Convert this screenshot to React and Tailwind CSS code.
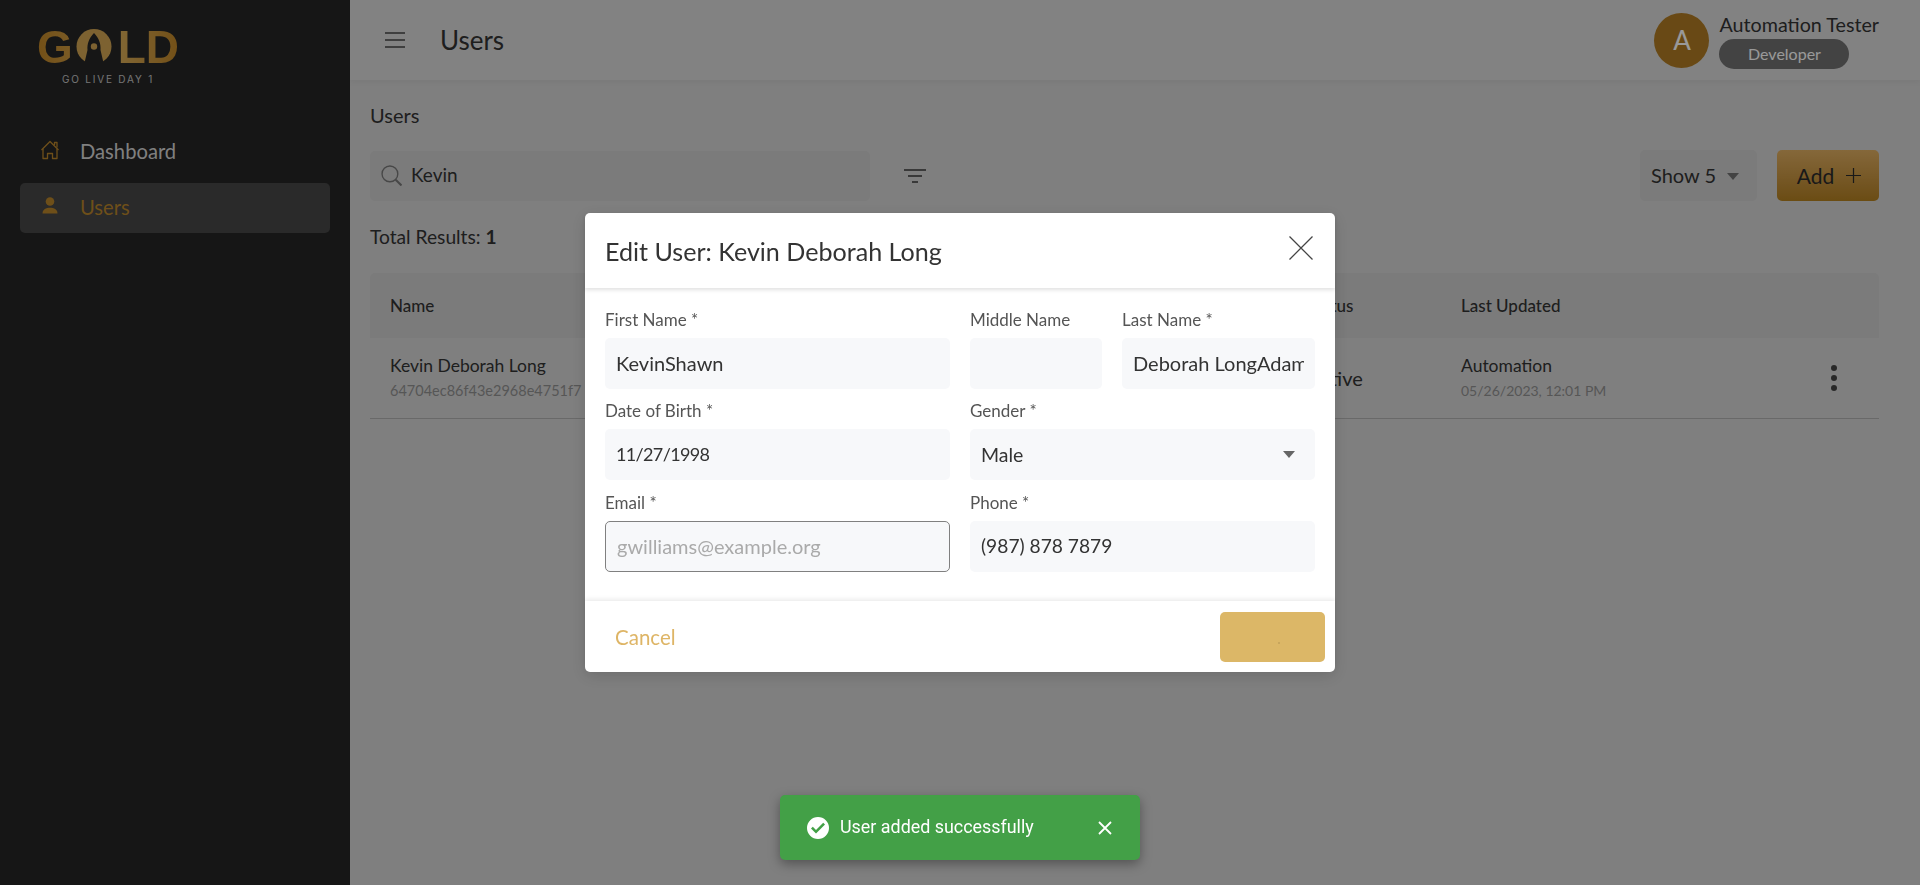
import React from "react";

function Field({ label, value, placeholder, bordered, className, inputClass }) {
  return (
    <div className={className}>
      <label className="block h-[24px] mb-[6px] text-[17px] leading-[24px] text-[#555]">{label}</label>
      <input
        readOnly
        value={value}
        placeholder={placeholder}
        className={
          "block w-full h-[51px] px-[11px] pb-[2px] rounded-[5px] bg-[#f7f8fa] text-[#333] placeholder:text-[#aaa] outline-none " +
          (inputClass || "text-[20px]") +
          (bordered ? " border border-[#808080]" : "")
        }
      />
    </div>
  );
}

function Logo() {
  return (
    <div className="flex flex-col items-center w-[140px]">
      <div className="flex items-center h-[36px] font-['Liberation_Sans',sans-serif] font-bold text-[46px] leading-[36px]">
        <span className="bg-gradient-to-r from-[#bf8526] to-[#cc983f] bg-clip-text text-transparent">G</span>
        <svg viewBox="0 0 36 36" className="w-[36px] h-[36px] ml-[3px] mr-[6px]">
          <circle cx="18" cy="17.5" r="17.5" fill="#d0a453" />
          <path d="M18 4C13 9 11 15 11.500 21L8 36H28L24.500 21C25 15 23 9 18 4Z" fill="#262626" />
          <circle cx="18" cy="17.500" r="3.200" fill="#d0a453" />
        </svg>
        <span className="bg-gradient-to-r from-[#d8ac58] to-[#bf8526] bg-clip-text text-transparent">LD</span>
      </div>
      <div className="mt-[8px] text-[10px] leading-[12px] tracking-[1.8px] text-[#c4c4c4] font-['Inter',sans-serif]">GO LIVE DAY 1</div>
    </div>
  );
}

export default function App() {
  return (
    <div className="relative flex h-[885px] w-full overflow-hidden bg-[#d4d4d4] font-['Lato',sans-serif] text-[#333]">
      {/* Sidebar */}
      <aside className="w-[350px] shrink-0 bg-[#262626] px-[20px]">
        <div className="pt-[29px] pl-[18px] h-[126px]">
          <Logo />
        </div>
        <nav className="flex flex-col">
          <div className="flex items-center h-[50px] pt-[1px] pl-[20px] text-[20.2px] text-[#d5d5d5]">
            <svg viewBox="0 0 20 20" className="w-[20px] h-[20px] mr-[20px] -mt-[4px]" fill="none" stroke="#b7842b" strokeWidth="1.300" strokeLinejoin="round">
              <path d="M1.500 10 10 1.500l8.500 8.500" />
              <path d="M3 9v9.500h4.500V13.500h5v5H17V9" />
              <path d="M14.500 5V2.500H17V7.500" />
            </svg>
            <span>Dashboard</span>
          </div>
          <div className="flex items-center h-[50px] mt-[7px] pb-[2px] pl-[20px] rounded-[5px] bg-[#464646] text-[20.2px] text-[#b7842b]">
            <svg viewBox="0 0 20 20" className="w-[20px] h-[20px] mr-[20px] -mt-[2px]" fill="#b7842b">
              <circle cx="10" cy="5.500" r="4.300" />
              <path d="M2.500 17.500C2.500 13.500 6 11.800 10 11.800s7.500 1.700 7.500 5.700z" />
            </svg>
            <span>Users</span>
          </div>
        </nav>
      </aside>

      {/* Main */}
      <main className="flex-1 min-w-0">
        <header className="flex items-center justify-between h-[80px] pl-[35px] pr-[41px] bg-[#d9d9d9] shadow-[0_2px_6px_rgba(0,0,0,0.05)]">
          <div className="flex items-center">
            <svg viewBox="0 0 20 16" className="w-[20px] h-[16px]" stroke="#444" strokeWidth="1.600">
              <path d="M0 1h20M0 8h20M0 15h20" />
            </svg>
            <h1 className="ml-[35px] text-[26px] leading-[30px] text-[#333]">Users</h1>
          </div>
          <div className="flex items-center">
            <div className="flex items-center justify-center w-[55px] h-[55px] rounded-full bg-[#af7b23] text-[26px] text-white">A</div>
            <div className="ml-[10px] pt-[1px]">
              <div className="text-[19.7px] leading-[24px] text-[#333] mb-[2px]">Automation Tester</div>
              <div className="flex items-center justify-center w-[130px] h-[30px] rounded-full bg-[#707070] text-[16px] text-white">Developer</div>
            </div>
          </div>
        </header>

        <div className="pl-[20px] pr-[41px]">
          <div className="pt-[24px] text-[20px] leading-[22px] text-[#333]">Users</div>
          <div className="flex items-center mt-[24px] h-[51px]">
            <div className="flex items-center w-[500px] h-[50px] pl-[11px] rounded-[5px] bg-[#cdcdcd] text-[19px]">
              <svg viewBox="0 0 20 20" className="w-[21px] h-[21px]" fill="none" stroke="#777" strokeWidth="1.300">
                <circle cx="8.500" cy="8.500" r="7.500" />
                <path d="M14 14l5.500 5.500" strokeWidth="2" />
              </svg>
              <span className="ml-[9px] text-[#333]">Kevin</span>
            </div>
            <svg viewBox="0 0 22 14" className="ml-[34px] w-[22px] h-[14px]" stroke="#393939" strokeWidth="1.700">
              <path d="M0 1h22M4 7h14M8 13h6" />
            </svg>
            <div className="flex-1" />
            <div className="flex items-center w-[117px] h-[51px] pl-[11px] pb-[2px] rounded-[5px] bg-[#cdcdcd] text-[20px]">
              <span>Show 5</span>
              <span className="ml-[11px] mt-[4px] w-0 h-0 border-x-[6px] border-x-transparent border-t-[7px] border-t-[#707070]" />
            </div>
            <div className="flex items-center justify-center gap-[12px] ml-[20px] pl-[2px] w-[102px] h-[51px] rounded-[5px] bg-gradient-to-b from-[#dead61] to-[#b27f20] text-[21px] text-[#2b2b2b]">
              <span>Add</span>
              <svg viewBox="0 0 16 16" className="w-[15px] h-[15px]" stroke="#2b2b2b" strokeWidth="1.300">
                <path d="M8 0v16M0 8h16" />
              </svg>
            </div>
          </div>
          <div className="mt-[24px] text-[19.200px] leading-[24px]">
            Total Results: <span className="font-bold">1</span>
          </div>

          <div className="mt-[24px]">
            <div className="grid grid-cols-[917px_154px_1fr] items-center h-[65px] pl-[20px] pr-[19px] pt-[1px] rounded-t-[5px] bg-[#cdcdcd] text-[17px] font-medium text-[#333]">
              <span>Name</span>
              <span>Status</span>
              <span>Last Updated</span>
            </div>
            <div className="grid grid-cols-[917px_154px_1fr_auto] items-center h-[81px] pl-[20px] pr-[19px] border-b border-[#b0b0b0]">
              <div>
                <div className="text-[17.500px] leading-[22px]">Kevin Deborah Long</div>
                <div className="mt-[4px] text-[14.500px] leading-[20px] text-[#909090]">64704ec86f43e2968e4751f7</div>
              </div>
              <span className="text-[20px]">Active</span>
              <div>
                <div className="text-[17.500px] leading-[22px]">Automation</div>
                <div className="mt-[4px] text-[14px] leading-[20px] text-[#909090]">05/26/2023, 12:01 PM</div>
              </div>
              <div className="flex flex-col gap-[4px] mr-[23px] items-center">
                <span className="w-[6px] h-[6px] rounded-full bg-[#444]" />
                <span className="w-[6px] h-[6px] rounded-full bg-[#444]" />
                <span className="w-[6px] h-[6px] rounded-full bg-[#444]" />
              </div>
            </div>
          </div>
        </div>
      </main>

      {/* Backdrop and dialog */}
      <div className="fixed inset-0 flex items-center justify-center bg-black/40">
        <div className="w-[750px] h-[459px] rounded-[5px] bg-white shadow-[0_4px_16px_rgba(0,0,0,0.15)] flex flex-col">
          <div className="relative z-10 flex items-center justify-between h-[75px] pl-[20px] pr-[22px] shadow-[0_2px_4px_rgba(0,0,0,0.12)]">
            <h2 className="text-[25.100px] leading-[30px] text-[#333]">Edit User: Kevin Deborah Long</h2>
            <svg viewBox="0 0 24 24" className="w-[24px] h-[24px] -mt-[6px]" stroke="#444" strokeWidth="1.300">
              <path d="M0.500 0.500 23.500 23.500M23.500 0.500 0.500 23.500" />
            </svg>
          </div>
          <div className="flex-1 grid grid-cols-2 gap-x-[20px] gap-y-[10px] content-start px-[20px] pt-[20px]">
            <Field label="First Name *" value="KevinShawn" />
            <div className="flex gap-[20px]">
              <Field label="Middle Name" value="" className="w-[132px]" />
              <Field label="Last Name *" value="Deborah LongAdam" className="flex-1 min-w-0" />
            </div>
            <Field label="Date of Birth *" value="11/27/1998" inputClass="text-[18px] tracking-[-0.65px]" />
            <div>
              <label className="block h-[24px] mb-[6px] text-[17px] leading-[24px] text-[#555]">Gender *</label>
              <div className="flex items-center justify-between h-[51px] pl-[11px] pr-[20px] rounded-[5px] bg-[#f7f8fa] text-[19.500px]">
                <span>Male</span>
                <span className="w-0 h-0 border-x-[6px] border-x-transparent border-t-[7px] border-t-[#666]" />
              </div>
            </div>
            <Field label="Email *" value="" placeholder="gwilliams@example.org" bordered className="mt-px" />
            <Field label="Phone *" value="(987) 878 7879" className="mt-px" inputClass="text-[19.200px]" />
          </div>
          <div className="flex items-center justify-between h-[71px] pl-[30px] pr-[10px] rounded-b-[5px] shadow-[0_-2px_4px_rgba(0,0,0,0.08)]">
            <span className="pt-[2px] text-[20.500px] text-[#deb566]">Cancel</span>
            <div className="relative w-[105px] h-[50px] rounded-[5px] bg-[#dcb767]">
              <span className="absolute left-[58px] top-[30px] w-[2px] h-[2px] rounded-full bg-[#c2a05a]" />
            </div>
          </div>
        </div>
      </div>

      {/* Toast */}
      <div className="fixed left-[780px] bottom-[25px] flex items-center w-[360px] h-[65px] pl-[27px] rounded-[5px] bg-[#43a047] text-white shadow-[0_4px_12px_rgba(0,0,0,0.35)]">
        <svg viewBox="0 0 24 24" className="w-[24px] h-[24px] -ml-[1px]" fill="#fff">
          <path d="M12 1a11 11 0 1 0 0 22 11 11 0 0 0 0-22zm-2 16.500-5-5 1.800-1.800 3.200 3.200 7.200-7.200L19 8.500z" />
        </svg>
        <span className="ml-[10px] font-['Roboto',sans-serif] text-[17.900px] -mt-[1px]">User added successfully</span>
        <svg viewBox="0 0 14 14" className="ml-[64px] w-[14px] h-[14px]" stroke="#fff" strokeWidth="1.800">
          <path d="M1 1l12 12M13 1 1 13" />
        </svg>
      </div>
    </div>
  );
}
